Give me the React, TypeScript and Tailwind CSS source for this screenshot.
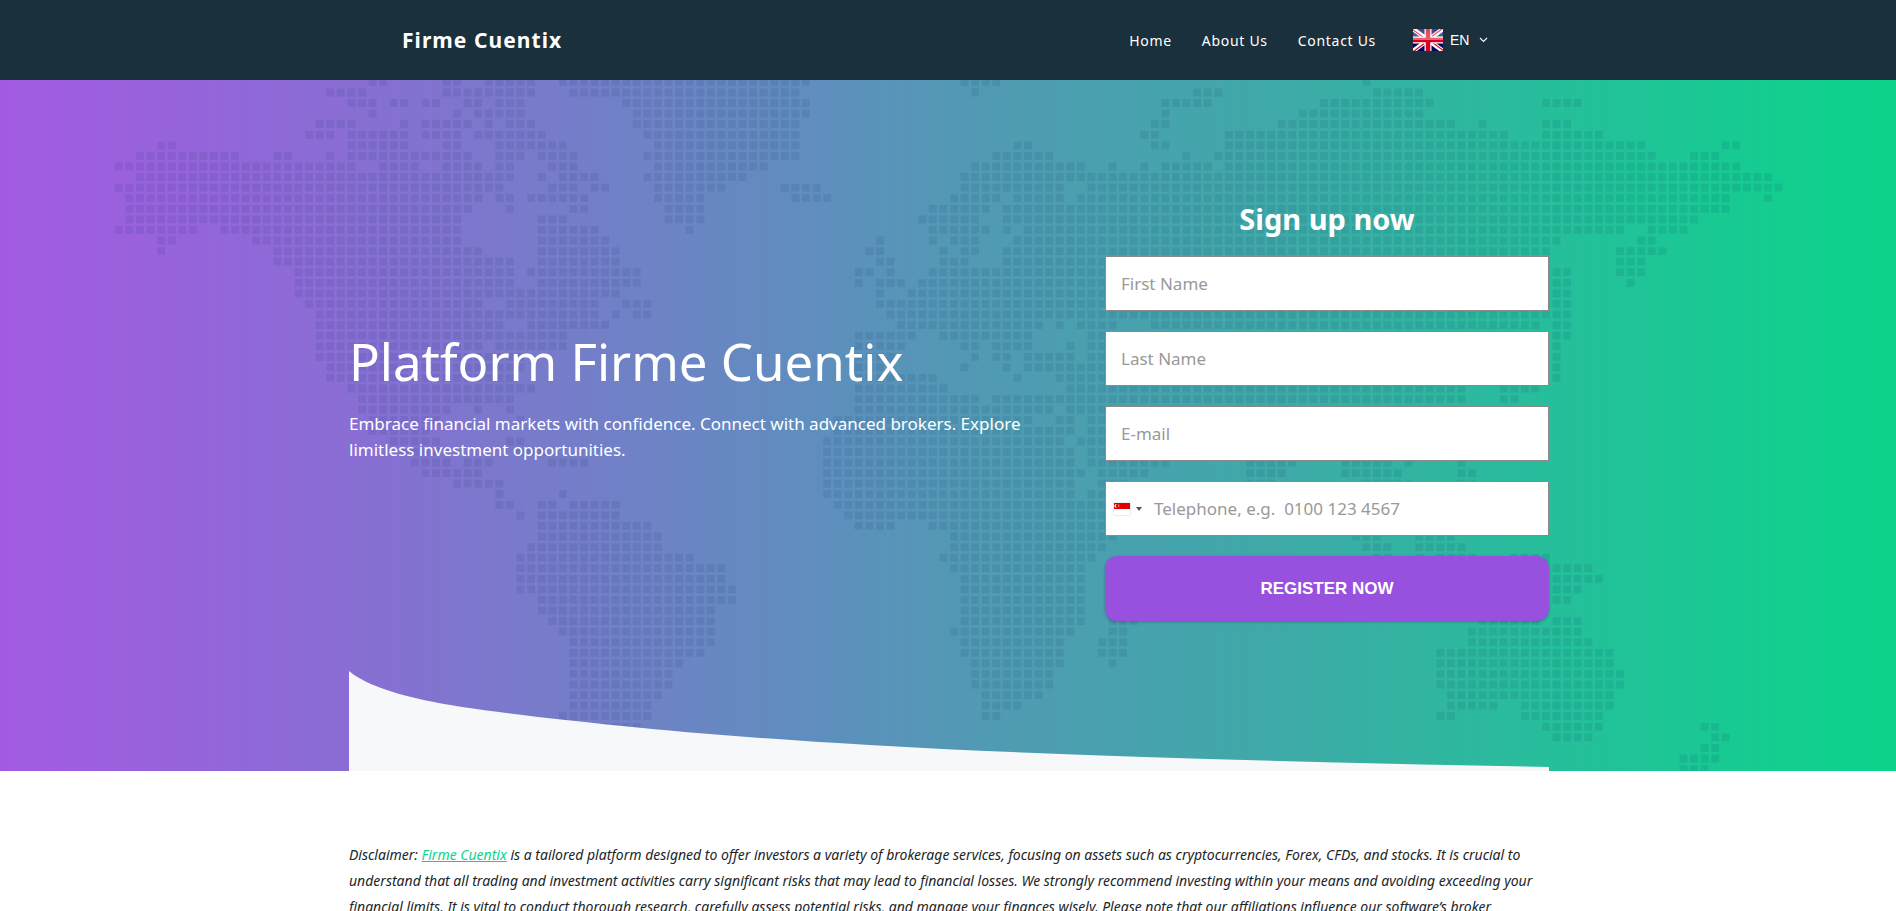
import type { ReactNode } from "react";

type Run = [number, number];

// Land cells of the dotted world map: for each row, the first and last column of every run.
const LAND: Run[][] = [
  [[24, 25], [31, 32], [35, 39], [42, 65], [80, 83], [118, 118]],
  [[20, 23], [31, 39], [43, 64], [81, 81], [102, 104], [119, 123]],
  [[22, 24], [26, 27], [29, 30], [33, 34], [36, 38], [48, 65], [99, 103], [114, 124], [135, 138]],
  [[24, 24], [32, 32], [34, 38], [49, 65], [99, 99], [112, 123]],
  [[19, 22], [27, 27], [29, 33], [35, 35], [37, 39], [49, 64], [98, 99], [110, 126], [129, 129], [135, 137]],
  [[18, 20], [22, 27], [29, 32], [34, 40], [50, 64], [97, 98], [105, 131], [135, 140]],
  [[4, 5], [22, 27], [31, 32], [36, 42], [51, 64], [85, 86], [98, 99], [105, 144], [152, 153]],
  [[2, 11], [15, 16], [20, 20], [22, 33], [36, 38], [40, 43], [50, 64], [83, 88], [101, 101], [104, 145], [149, 151]],
  [[0, 22], [25, 28], [31, 34], [36, 37], [41, 43], [51, 61], [81, 91], [94, 94], [97, 97], [99, 103], [105, 153]],
  [[2, 37], [40, 40], [42, 45], [50, 59], [80, 156]],
  [[0, 36], [41, 43], [45, 46], [51, 57], [63, 66], [80, 89], [92, 157]],
  [[1, 34], [36, 37], [39, 44], [51, 55], [64, 67], [79, 83], [85, 89], [91, 152], [156, 156]],
  [[1, 33], [37, 37], [43, 44], [52, 55], [77, 82], [84, 152]],
  [[1, 32], [40, 42], [52, 55], [76, 81], [84, 149]],
  [[0, 7], [10, 32], [40, 45], [54, 54], [77, 82], [84, 84], [86, 142], [145, 148]],
  [[4, 5], [13, 32], [40, 46], [72, 72], [77, 77], [79, 81], [85, 136], [144, 145]],
  [[4, 4], [15, 34], [40, 47], [71, 72], [78, 78], [80, 81], [84, 135], [142, 146]],
  [[15, 37], [40, 47], [72, 73], [78, 80], [84, 135], [142, 144]],
  [[17, 37], [39, 49], [70, 71], [73, 73], [77, 137], [142, 144]],
  [[17, 37], [40, 49], [70, 70], [72, 74], [76, 137], [143, 143]],
  [[17, 47], [72, 72], [75, 137]],
  [[18, 34], [37, 45], [48, 50], [72, 137]],
  [[19, 45], [47, 47], [49, 50], [73, 137]],
  [[19, 36], [39, 46], [74, 87], [89, 89], [91, 94], [98, 134], [136, 137]],
  [[19, 42], [70, 75], [78, 86], [92, 134], [136, 137]],
  [[19, 34], [36, 42], [70, 74], [80, 81], [83, 86], [90, 90], [92, 134], [136, 136]],
  [[19, 38], [70, 73], [81, 81], [83, 84], [86, 90], [92, 134], [136, 136]],
  [[20, 38], [70, 72], [80, 80], [84, 84], [86, 134], [136, 136]],
  [[20, 37], [70, 77], [85, 85], [89, 134], [136, 136]],
  [[22, 39], [70, 78], [90, 127], [131, 134]],
  [[23, 37], [70, 81], [83, 127], [131, 132]],
  [[23, 31], [34, 34], [37, 37], [70, 88], [90, 126]],
  [[24, 30], [38, 38], [68, 86], [89, 90], [92, 125]],
  [[24, 29], [68, 90], [92, 120]],
  [[26, 30], [37, 38], [67, 89], [91, 110], [116, 121]],
  [[27, 31], [38, 40], [67, 90], [92, 110], [116, 121]],
  [[28, 31], [33, 35], [41, 44], [67, 90], [92, 99], [107, 111], [116, 120], [122, 122], [127, 127]],
  [[29, 34], [67, 91], [93, 97], [107, 110], [116, 121], [127, 128]],
  [[32, 36], [67, 90], [93, 95], [107, 109], [118, 122], [127, 128]],
  [[36, 36], [42, 42], [67, 90], [92, 94]],
  [[36, 37], [40, 41], [43, 47], [68, 93]],
  [[38, 38], [40, 47], [69, 93]],
  [[40, 50], [70, 73], [77, 95]],
  [[40, 51], [79, 94], [117, 119], [123, 126]],
  [[39, 51], [79, 93], [118, 120], [123, 127]],
  [[38, 54], [78, 92], [119, 120], [123, 123], [125, 128], [132, 135]],
  [[38, 57], [79, 91], [136, 139]],
  [[38, 57], [80, 91], [136, 140]],
  [[38, 58], [80, 91], [136, 138]],
  [[40, 58], [80, 91], [136, 137]],
  [[40, 56], [80, 91]],
  [[41, 56], [80, 91], [94, 96], [129, 134], [136, 138]],
  [[42, 56], [79, 90], [94, 95], [128, 138]],
  [[43, 56], [80, 89], [93, 95], [128, 139]],
  [[43, 55], [80, 89], [93, 95], [125, 141]],
  [[43, 53], [81, 89], [94, 94], [125, 141]],
  [[43, 52], [81, 88], [125, 142]],
  [[43, 52], [81, 88], [125, 142]],
  [[43, 51], [82, 87], [126, 141]],
  [[43, 50], [82, 85], [126, 130], [133, 141]],
  [[42, 50], [82, 83], [125, 126], [133, 140]],
  [[43, 49], [135, 140], [150, 151]],
  [[136, 139], [151, 152]],
  [[150, 151]],
  [[148, 151]],
  [[148, 150]],
];

const PITCH = 10.572;
const DOT = 7.8;

const landPath = LAND.map((runs, row) =>
  runs
    .map(([from, to]) => {
      let d = "";
      for (let col = from; col <= to; col++) {
        const x = (118.8 + col * PITCH - DOT / 2).toFixed(1);
        const y = (1.9 + row * PITCH - DOT / 2).toFixed(1);
        d += `M${x} ${y}h${DOT}v${DOT}h-${DOT}z`;
      }
      return d;
    })
    .join(""),
).join("");

function WorldMap() {
  return (
    <svg
      aria-hidden="true"
      viewBox="0 0 1896 691"
      preserveAspectRatio="xMidYMin slice"
      className="absolute inset-0 h-full w-full"
    >
      <path d={landPath} fill="#00205a" fillOpacity="0.09" />
    </svg>
  );
}

function UkFlag() {
  return (
    <svg aria-hidden="true" viewBox="0 0 60 44" className="h-[22px] w-[30px]">
      <defs>
        <linearGradient id="gloss" x1="0" y1="0" x2="0" y2="1">
          <stop offset="0" stopColor="#fff" stopOpacity="0.25" />
          <stop offset="0.5" stopColor="#fff" stopOpacity="0.4" />
          <stop offset="0.5" stopColor="#fff" stopOpacity="0" />
          <stop offset="1" stopColor="#fff" stopOpacity="0" />
        </linearGradient>
        <clipPath id="saltire">
          <path d="M30 22H60V44ZM30 22V44H0ZM30 22H0V0ZM30 22V0H60Z" />
        </clipPath>
      </defs>
      <rect width="60" height="44" fill="#00005f" />
      <path d="M0 0L60 44M60 0L0 44" stroke="#fff" strokeWidth="9" />
      <path d="M0 0L60 44M60 0L0 44" stroke="#d8102c" strokeWidth="5" clipPath="url(#saltire)" />
      <path d="M30 0V44M0 22H60" stroke="#fff" strokeWidth="14" />
      <path d="M30 0V44M0 22H60" stroke="#d8001c" strokeWidth="9" />
      <rect width="60" height="44" fill="url(#gloss)" />
    </svg>
  );
}

function SingaporeFlag() {
  return (
    <svg aria-hidden="true" viewBox="0 0 18 14" className="h-[14px] w-[18px]">
      <rect x="0.5" y="0.5" width="17" height="13" rx="1" fill="#fff" stroke="#ececec" />
      <rect x="1" y="1" width="16" height="6" fill="#e00000" />
      <path d="M3.8 2.2a1.8 1.8 0 1 0 0 3.4a2.2 2.2 0 0 1 0-3.4z" fill="#fff" />
      <path d="M5 2.6h1.2v2.4H5z" fill="#fff" fillOpacity="0.5" />
    </svg>
  );
}

function Field({ label, type = "text" }: { label: string; type?: string }) {
  return (
    <input
      type={type}
      aria-label={label}
      placeholder={label}
      className="block h-[55px] w-full border border-[#8a8a8a] bg-white px-[15px] text-[17px] text-gray-800 outline-none placeholder:text-[#999999]"
    />
  );
}

function NavLink({ href, children }: { href: string; children: ReactNode }) {
  return (
    <a href={href} className="text-sm tracking-wider text-white">
      {children}
    </a>
  );
}

function Header() {
  return (
    <header className="bg-[#1a303c]">
      <div className="mx-auto flex h-20 max-w-[1200px] items-center justify-between px-[54px]">
        <a href="#home" className="pt-0.5 text-[21px] font-bold tracking-wider text-white">
          Firme Cuentix
        </a>
        <div className="flex items-center gap-[37px]">
          <nav className="flex items-center gap-[30px] pt-0.5">
            <NavLink href="#home">Home</NavLink>
            <NavLink href="#about">About Us</NavLink>
            <NavLink href="#contact">Contact Us</NavLink>
          </nav>
          <div className="flex items-center pr-[6px]">
            <label htmlFor="language" className="mr-[7px]">
              <UkFlag />
            </label>
            <select
              id="language"
              aria-label="Language"
              className="w-[38px] appearance-none bg-transparent font-['Liberation_Sans',sans-serif] text-sm text-white outline-none"
            >
              <option>EN</option>
            </select>
            <svg aria-hidden="true" viewBox="0 0 9 6" className="pointer-events-none -ml-[9px] h-[6px] w-[9px]">
              <path d="M1 1l3.5 3.5L8 1" fill="none" stroke="#fff" strokeWidth="1.1" />
            </svg>
          </div>
        </div>
      </div>
    </header>
  );
}

function SignUpForm() {
  return (
    <form className="flex flex-col" onSubmit={(e) => e.preventDefault()}>
      <h2 className="mb-[18px] text-center text-[29px] leading-[38px] font-bold text-white">Sign up now</h2>
      <div className="flex flex-col gap-5">
        <Field label="First Name" />
        <Field label="Last Name" />
        <Field label="E-mail" type="email" />
        <div className="flex h-[55px] items-center border border-[#8a8a8a] bg-white">
          <button type="button" aria-label="Country: Singapore" className="flex h-full items-center gap-[5px] pl-[7px]">
            <SingaporeFlag />
            <svg aria-hidden="true" viewBox="0 0 6 4" className="h-1 w-[6px]">
              <path d="M0 0h6L3 4z" fill="#555" />
            </svg>
          </button>
          <input
            type="tel"
            aria-label="Telephone"
            placeholder="Telephone, e.g.  0100 123 4567"
            className="h-full min-w-0 flex-1 bg-transparent pr-4 pl-3 text-[17px] text-gray-800 outline-none placeholder:text-[#999999]"
          />
        </div>
        <button
          type="submit"
          className="h-[65px] rounded-xl bg-[#9850de] font-['Liberation_Sans',sans-serif] text-[17px] font-bold text-white shadow-[0_1px_3px_rgba(0,0,0,0.25)]"
        >
          REGISTER NOW
        </button>
      </div>
    </form>
  );
}

function Hero() {
  return (
    <section className="relative bg-[linear-gradient(90deg,#a35ae3_0%,#8b6cd5_17%,#7081c6_33%,#5f8ebe_43%,#5398b5_50%,#3fa9a8_67%,#24c09a_83%,#0bd48a_100%)]">
      <WorldMap />
      <div className="relative mx-auto max-w-[1202px] pt-[120px] pl-0.5">
        <div className="grid grid-cols-[1fr_444px] items-center gap-x-14">
          <div className="text-white">
            <h1 className="mb-5 text-[51px] leading-[60px]">Platform Firme Cuentix</h1>
            <p className="mb-7 text-[17px] leading-[26px]">
              Embrace financial markets with confidence. Connect with advanced brokers. Explore limitless investment
              opportunities.
            </p>
          </div>
          <SignUpForm />
        </div>
        <svg
          aria-hidden="true"
          viewBox="0 0 1200 100"
          preserveAspectRatio="none"
          className="mt-[50px] block h-[100px] w-full"
        >
          <path
            d="M0 0C14 12 42 22 77 29.5C118 38.2 200 47.6 291 56.7C391 66.5 511 74.3 631 79.7C820 88.2 1010 92.3 1200 96V100H0Z"
            fill="#f7f8fa"
          />
        </svg>
      </div>
    </section>
  );
}

function Disclaimer() {
  return (
    <section className="mx-auto max-w-[1202px] pt-[71px] pl-0.5">
      <p className="text-sm leading-[26px] text-[#212529] italic">
        Disclaimer:{" "}
        <a href="#home" className="text-[#0dd38a] underline">
          Firme Cuentix
        </a>{" "}
        is a tailored platform designed to offer investors a variety of brokerage services, focusing on assets such as
        cryptocurrencies, Forex, CFDs, and stocks. It is crucial to understand that all trading and investment
        activities carry significant risks that may lead to financial losses. We strongly recommend investing within
        your means and avoiding exceeding your financial limits. It is vital to conduct thorough research, carefully
        assess potential risks, and manage your finances wisely. Please note that our affiliations influence our
        software’s broker
      </p>
    </section>
  );
}

export default function App() {
  return (
    <div className="min-h-screen bg-white font-['Noto_Sans','Open_Sans',sans-serif]">
      <Header />
      <main>
        <Hero />
        <Disclaimer />
      </main>
    </div>
  );
}
